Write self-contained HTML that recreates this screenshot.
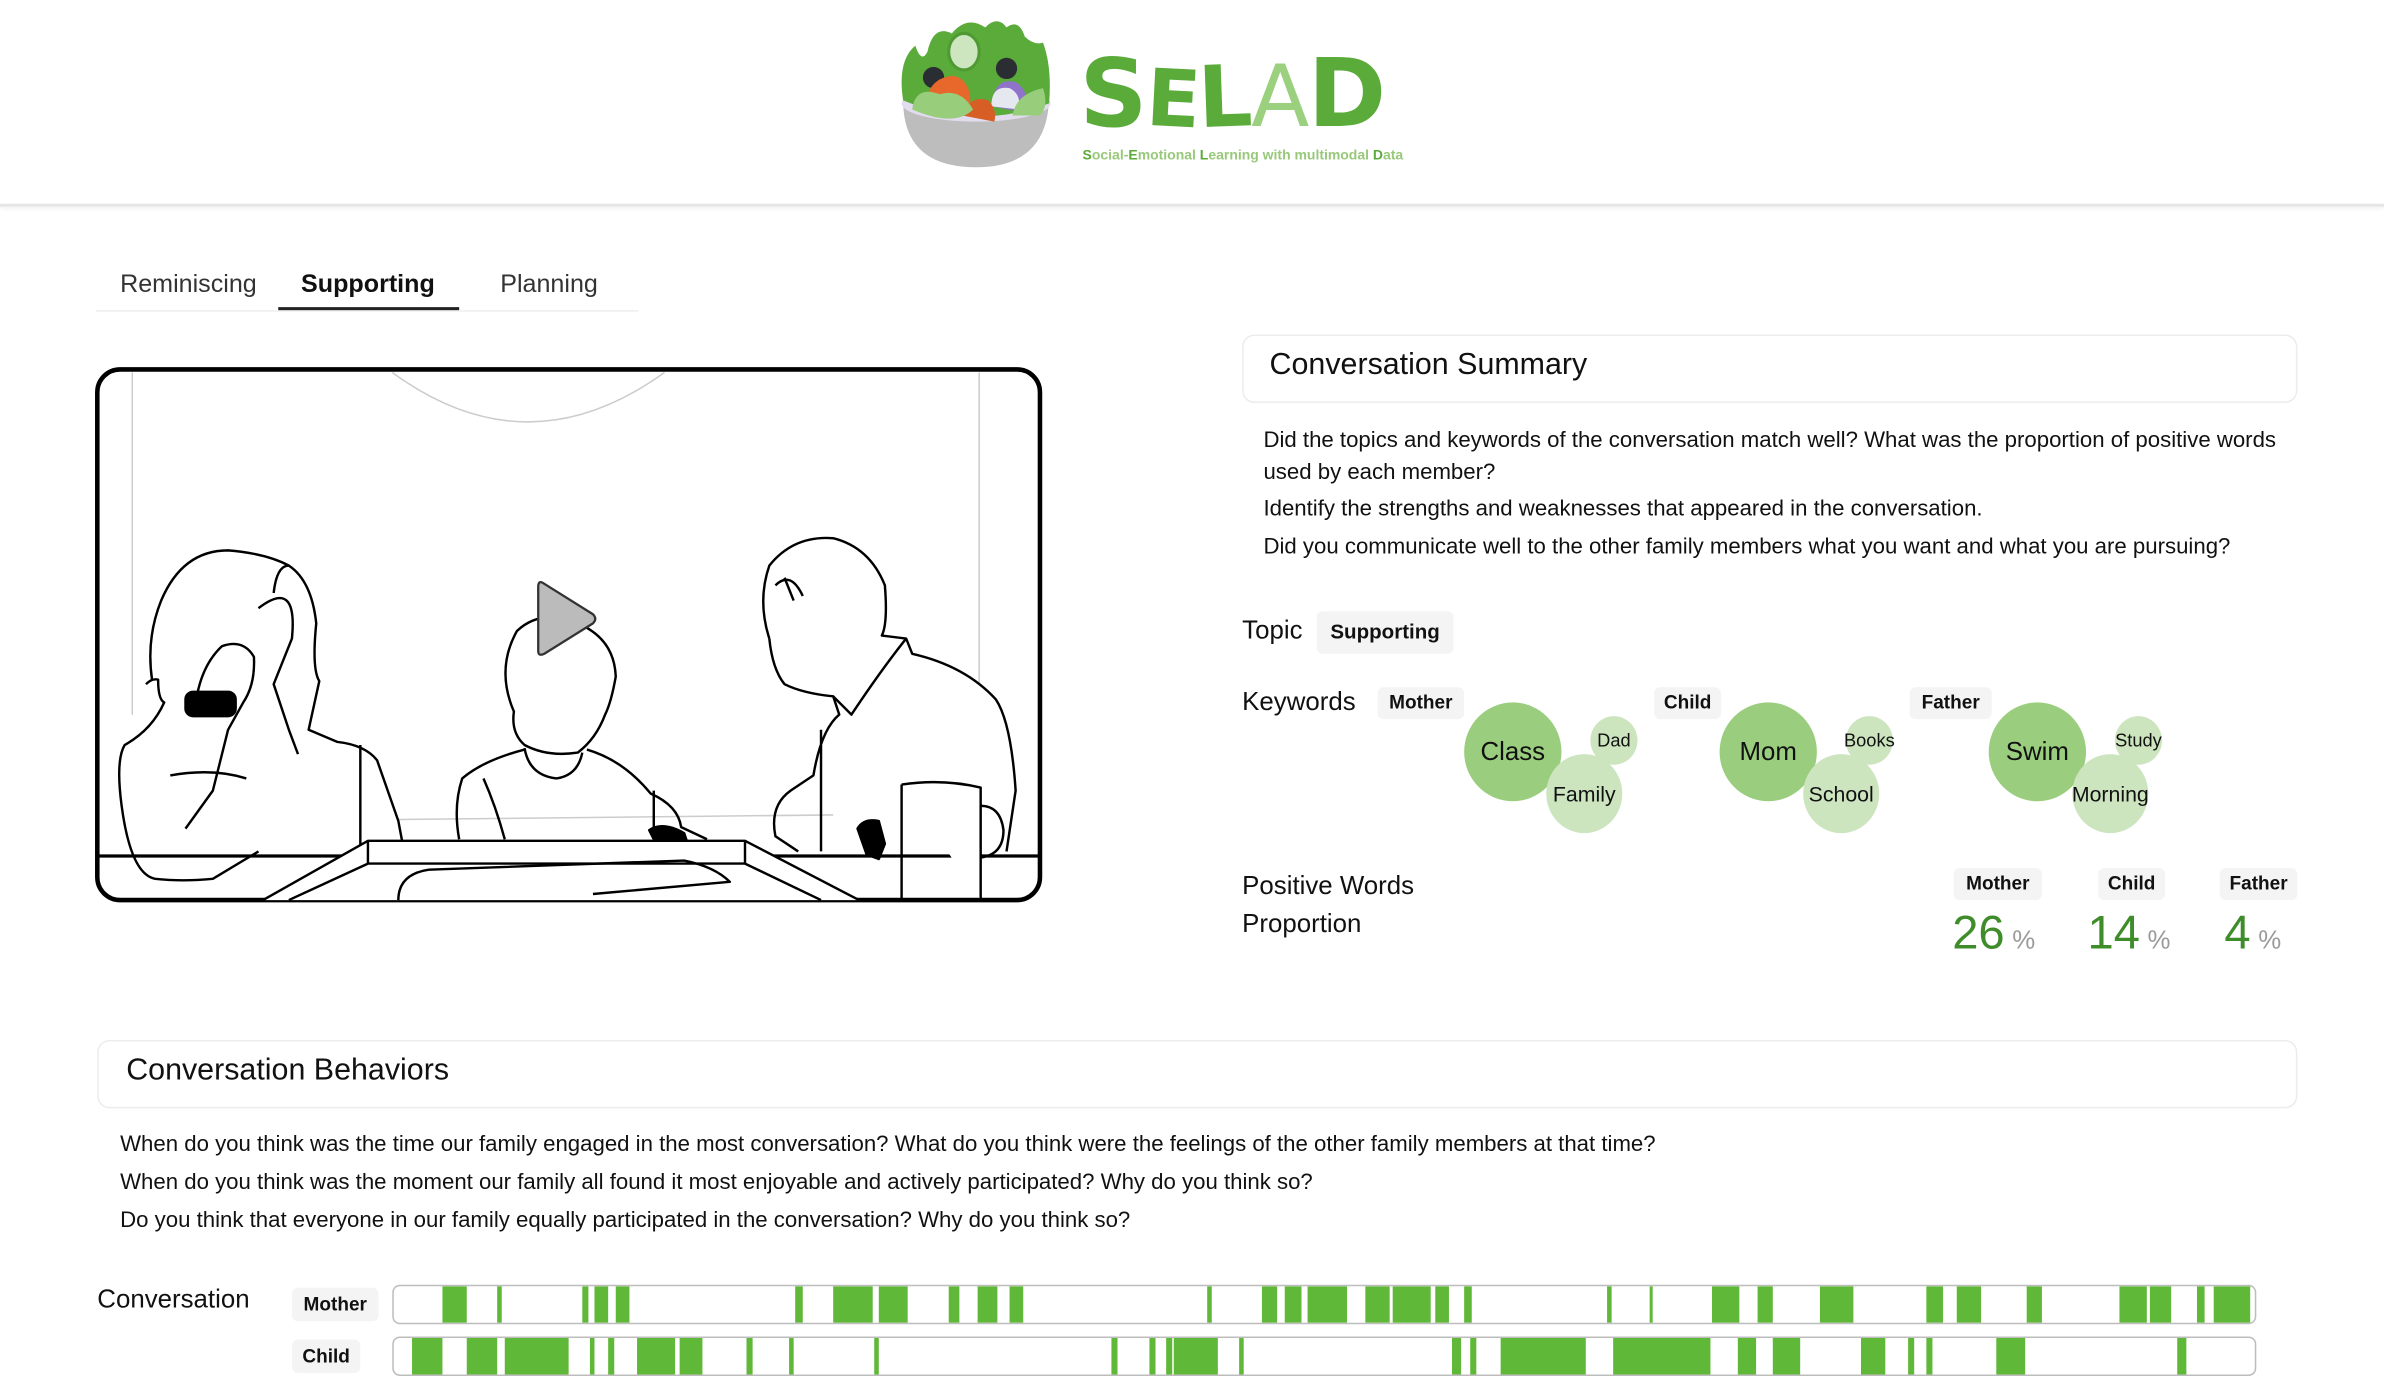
<!DOCTYPE html>
<html><head><meta charset="utf-8">
<style>
*{margin:0;padding:0;box-sizing:border-box}
html,body{width:2384px;height:1380px;overflow:hidden;background:#fff}
#s{position:absolute;left:0;top:0;width:1568px;height:908px;transform:scale(1.52041);transform-origin:0 0;font-family:"Liberation Sans",sans-serif;color:#111}
.a{position:absolute;white-space:nowrap}
.hdr{position:absolute;left:0;top:0;width:1568px;height:136px;border-bottom:2px solid #e6e6e6;box-shadow:0 1px 3px rgba(0,0,0,.06)}
.box{position:absolute;border:1px solid #ececec;border-radius:8px;background:#fff}
.chip{position:absolute;background:#f4f4f4;border-radius:4px;font-weight:bold;font-size:12.5px;text-align:center}
.t{font-size:14.6px;color:#111}
.b{position:absolute;border-radius:50%;display:flex;align-items:center;justify-content:center;color:#111}
.bar{position:absolute;left:258px;width:1226px;height:26px;border:1.5px solid #bdbdbd;border-radius:5px;overflow:hidden;background:#fff}
.bar i{position:absolute;top:0;bottom:0;background:#5fb838}
.num{position:absolute;font-size:31px;color:#3e8d2a}
.pc{font-size:17px;color:#9a9a9a;margin-left:5px}
</style></head><body><div id="s">
<div class="hdr"></div>
<svg class="a" style="left:588px;top:10px" width="110" height="104" viewBox="0 0 110 104">
<path d="M6 56 Q6 100 54 100 Q100 100 102 56 Z" fill="#bdbdbd"/>
<ellipse cx="54" cy="58" rx="49" ry="12" fill="#e2dcee"/>
<path d="M6 56 Q2 30 14 20 Q18 32 22 24 Q26 6 38 12 Q48 0 60 8 Q68 0 74 8 Q82 2 86 14 Q92 20 98 18 Q104 34 102 58 Q54 76 6 56Z" fill="#5aab3a"/>
<ellipse cx="46" cy="24" rx="10" ry="12" fill="#cde6bf" stroke="#4f9a33" stroke-width="2"/>
<circle cx="26" cy="41" r="7" fill="#2a2e33"/><circle cx="74" cy="35" r="7" fill="#2a2e33"/>
<path d="M20 62 Q22 40 40 40 Q52 44 50 62Z" fill="#e8672a"/>
<path d="M64 60 Q66 40 80 44 Q90 50 86 64Z" fill="#8f72c9"/><path d="M64 60 Q64 46 76 48 Q84 52 82 62Z" fill="#e6e8ef"/>
<path d="M45 66 Q50 52 62 56 Q68 62 66 70Z" fill="#d75e24"/>
<path d="M12 62 Q14 46 30 52 Q44 48 52 62 Q40 74 12 62Z" fill="#98cd7c"/>
<path d="M78 66 Q80 52 98 48 Q102 60 96 66Z" fill="#98cd7c"/>
</svg>
<div class="a" style="left:710px;top:22px;font-family:'DejaVu Sans',sans-serif;font-weight:bold;font-size:62px;color:#5aab3a;letter-spacing:-1px;line-height:80px">S<span style="font-size:52px;display:inline-block;transform:rotate(3deg)">E</span><span style="font-size:56px;display:inline-block;transform:rotate(-2deg)">L</span><span style="color:#9bd07f;font-weight:normal;font-size:56px">A</span>D</div>
<div class="a" style="left:712px;top:97px;font-size:9.2px;font-weight:bold;color:#98c97a"><span style="color:#5aab3a">S</span>ocial-<span style="color:#5aab3a">E</span>motional <span style="color:#5aab3a">L</span>earning with multimodal <span style="color:#5aab3a">D</span>ata</div>
<div class="a" style="left:63px;top:204px;width:357px;height:1px;background:#eee"></div>
<div class="a" style="left:183px;top:202px;width:119px;height:2px;background:#222"></div>
<div class="a" style="left:79px;top:178px;font-size:16.5px;color:#333">Reminiscing</div>
<div class="a" style="left:198px;top:178px;font-size:16.5px;font-weight:bold;color:#111">Supporting</div>
<div class="a" style="left:329px;top:178px;font-size:16.5px;color:#333">Planning</div>
<svg class="a" style="left:0;top:0" width="700" height="600" viewBox="0 0 700 600" fill="none" stroke="#000" stroke-width="1.6" stroke-linejoin="round">
<rect x="64" y="243" width="620" height="349" rx="15" fill="#fff" stroke-width="3"/>
<path d="M258 245 Q347 310 437 245" stroke="#ccc" stroke-width="1"/>
<path d="M87 245 V470 M644 245 V470" stroke="#ccc" stroke-width="1"/>
<path d="M262 539 L548 536" stroke="#ccc" stroke-width="1"/>
<path d="M65 563 H683" stroke-width="2.2"/>
<path d="M100 447 Q96 420 106 395 Q120 362 150 362 Q175 364 190 372 Q205 382 208 410 Q205 440 210 448 L203 480 L222 488 Q240 490 248 500 L262 540 L265 556" fill="#fff"/>
<path d="M96 450 Q100 446 104 447 Q104 460 108 462 Q100 480 82 490 Q76 500 80 530 Q86 575 102 578 Q120 580 140 578 L170 560"/>
<path d="M128 470 Q130 440 146 425 Q160 420 167 432 Q168 450 160 462 L150 480 L140 520 L122 545"/>
<rect x="122" y="455" width="33" height="16" rx="5" fill="#000"/>
<path d="M180 390 Q182 372 190 372 M170 400 Q196 380 192 420 L180 450 L190 480 L196 496"/>
<path d="M112 510 Q140 505 162 512 M237 490 V560"/>
<path d="M338 468 Q326 440 340 415 Q356 400 380 410 Q404 420 405 445 Q402 462 398 470 Q392 486 380 495 Q360 498 345 490 Q336 482 338 468Z" fill="#fff"/>
<path d="M345 492 Q348 510 366 512 Q380 510 383 495"/>
<path d="M345 493 Q318 500 304 512 Q298 530 302 552 M386 493 Q410 500 428 522 Q446 530 448 544 L465 552"/>
<path d="M318 512 Q326 530 332 552 M430 520 V552"/>
<path d="M427 546 Q436 540 450 548 L452 554 L430 552Z" fill="#000"/>
<path d="M506 420 Q498 395 506 372 Q522 352 548 354 Q572 360 582 385 Q584 410 580 418 L596 420 L600 430 Q635 438 655 460 Q665 475 668 520 L662 560" fill="#fff"/>
<path d="M506 420 Q508 440 516 450 Q528 456 548 458 L552 470 Q540 480 535 510 L520 520 Q506 530 510 550 L525 560 M548 458 L560 470 Q580 440 596 420 M540 480 V560"/>
<path d="M510 385 Q520 375 528 392 M516 380 L522 395"/>
<path d="M564 545 Q568 538 578 540 L582 555 L578 565 L570 562Z" fill="#000"/>
<path d="M173 592 L242 553 H490 L565 592" fill="#fff"/>
<path d="M242 553 V568 H490 V553 M242 568 L190 592 M490 568 L540 592"/>
<path d="M262 592 Q262 575 282 572 L450 566 Q470 570 480 580 L390 588"/>
<path d="M593 516 Q620 512 645 518 V592 M593 516 V592" fill="#fff"/>
<path d="M645 530 Q658 530 660 546 Q660 562 645 564"/>
<path d="M354 386 Q354 381 358 384 L390 404 Q393 407 390 410 L358 430 Q354 432 354 428Z" fill="#bbb" stroke="#333" stroke-width="1.5"/>
</svg>
<div class="box" style="left:817px;top:220px;width:694px;height:45px"></div>
<div class="a" style="left:835px;top:229px;font-size:20px">Conversation Summary</div>
<div class="a t" style="left:831px;top:280px;line-height:21px;white-space:normal;width:685px">Did the topics and keywords of the conversation match well? What was the proportion of positive words used by each member?</div>
<div class="a t" style="left:831px;top:327px">Identify the strengths and weaknesses that appeared in the conversation.</div>
<div class="a t" style="left:831px;top:352px">Did you communicate well to the other family members what you want and what you are pursuing?</div>
<div class="a" style="left:817px;top:405px;font-size:17px">Topic</div>
<div class="chip" style="left:866px;top:402px;width:90px;height:28px;line-height:28px;font-size:13.5px">Supporting</div>
<div class="a" style="left:817px;top:452px;font-size:17px">Keywords</div>
<div class="chip" style="left:906px;top:452px;width:57px;height:21px;line-height:21px">Mother</div>
<div class="chip" style="left:1088px;top:452px;width:44px;height:21px;line-height:21px">Child</div>
<div class="chip" style="left:1256px;top:452px;width:54px;height:21px;line-height:21px">Father</div>
<div class="b" style="left:963px;top:462px;width:64px;height:65px;background:#9bcd7e;font-size:17px">Class</div>
<div class="b" style="left:1046px;top:471px;width:31px;height:32px;background:#cce5bf;font-size:12px">Dad</div>
<div class="b" style="left:1017px;top:496px;width:50px;height:52px;background:#cce5bf;font-size:14px">Family</div>
<div class="b" style="left:1131px;top:462px;width:64px;height:65px;background:#9bcd7e;font-size:17px">Mom</div>
<div class="b" style="left:1214px;top:471px;width:31px;height:32px;background:#cce5bf;font-size:12px">Books</div>
<div class="b" style="left:1186px;top:496px;width:50px;height:52px;background:#cce5bf;font-size:14px">School</div>
<div class="b" style="left:1308px;top:462px;width:64px;height:65px;background:#9bcd7e;font-size:17px">Swim</div>
<div class="b" style="left:1391px;top:471px;width:31px;height:32px;background:#cce5bf;font-size:12px">Study</div>
<div class="b" style="left:1363px;top:496px;width:50px;height:52px;background:#cce5bf;font-size:14px">Morning</div>
<div class="a" style="left:817px;top:570px;font-size:17px;line-height:25px">Positive Words<br>Proportion</div>
<div class="chip" style="left:1285px;top:571px;width:58px;height:21px;line-height:21px">Mother</div>
<div class="chip" style="left:1380px;top:571px;width:44px;height:21px;line-height:21px">Child</div>
<div class="chip" style="left:1460px;top:571px;width:51px;height:21px;line-height:21px">Father</div>
<div class="num" style="left:1284px;top:596px">26<span class="pc">%</span></div>
<div class="num" style="left:1373px;top:596px">14<span class="pc">%</span></div>
<div class="num" style="left:1463px;top:596px">4<span class="pc">%</span></div>
<div class="box" style="left:64px;top:684px;width:1447px;height:45px"></div>
<div class="a" style="left:83px;top:693px;font-size:20px">Conversation Behaviors</div>
<div class="a t" style="left:79px;top:745px">When do you think was the time our family engaged in the most conversation? What do you think were the feelings of the other family members at that time?</div>
<div class="a t" style="left:79px;top:770px">When do you think was the moment our family all found it most enjoyable and actively participated? Why do you think so?</div>
<div class="a t" style="left:79px;top:795px">Do you think that everyone in our family equally participated in the conversation? Why do you think so?</div>
<div class="a" style="left:64px;top:845px;font-size:17px">Conversation</div>
<div class="chip" style="left:192px;top:847px;width:57px;height:22px;line-height:22px">Mother</div>
<div class="chip" style="left:192px;top:881px;width:45px;height:22px;line-height:22px">Child</div>
<div class="bar" style="top:845px">
<i style="left:32px;width:16px"></i><i style="left:68px;width:3px"></i><i style="left:124px;width:4px"></i><i style="left:132px;width:9px"></i><i style="left:146px;width:9px"></i><i style="left:264px;width:5px"></i><i style="left:289px;width:26px"></i><i style="left:319px;width:19px"></i><i style="left:365px;width:7px"></i><i style="left:384px;width:13px"></i><i style="left:405px;width:9px"></i><i style="left:535px;width:3px"></i><i style="left:571px;width:10px"></i><i style="left:586px;width:11px"></i><i style="left:601px;width:26px"></i><i style="left:639px;width:16px"></i><i style="left:657px;width:25px"></i><i style="left:685px;width:9px"></i><i style="left:704px;width:5px"></i><i style="left:798px;width:3px"></i><i style="left:826px;width:2px"></i><i style="left:867px;width:18px"></i><i style="left:897px;width:10px"></i><i style="left:938px;width:22px"></i><i style="left:1008px;width:11px"></i><i style="left:1028px;width:16px"></i><i style="left:1074px;width:10px"></i><i style="left:1135px;width:18px"></i><i style="left:1155px;width:14px"></i><i style="left:1186px;width:5px"></i><i style="left:1197px;width:24px"></i>
</div>
<div class="bar" style="top:879px">
<i style="left:12px;width:20px"></i><i style="left:48px;width:20px"></i><i style="left:73px;width:42px"></i><i style="left:129px;width:3px"></i><i style="left:141px;width:4px"></i><i style="left:160px;width:25px"></i><i style="left:188px;width:15px"></i><i style="left:232px;width:4px"></i><i style="left:260px;width:3px"></i><i style="left:316px;width:3px"></i><i style="left:472px;width:4px"></i><i style="left:497px;width:4px"></i><i style="left:508px;width:4px"></i><i style="left:513px;width:29px"></i><i style="left:556px;width:3px"></i><i style="left:696px;width:6px"></i><i style="left:708px;width:4px"></i><i style="left:728px;width:56px"></i><i style="left:802px;width:64px"></i><i style="left:884px;width:12px"></i><i style="left:907px;width:18px"></i><i style="left:965px;width:16px"></i><i style="left:996px;width:4px"></i><i style="left:1008px;width:4px"></i><i style="left:1054px;width:19px"></i><i style="left:1173px;width:6px"></i>
</div>
</div></body></html>
